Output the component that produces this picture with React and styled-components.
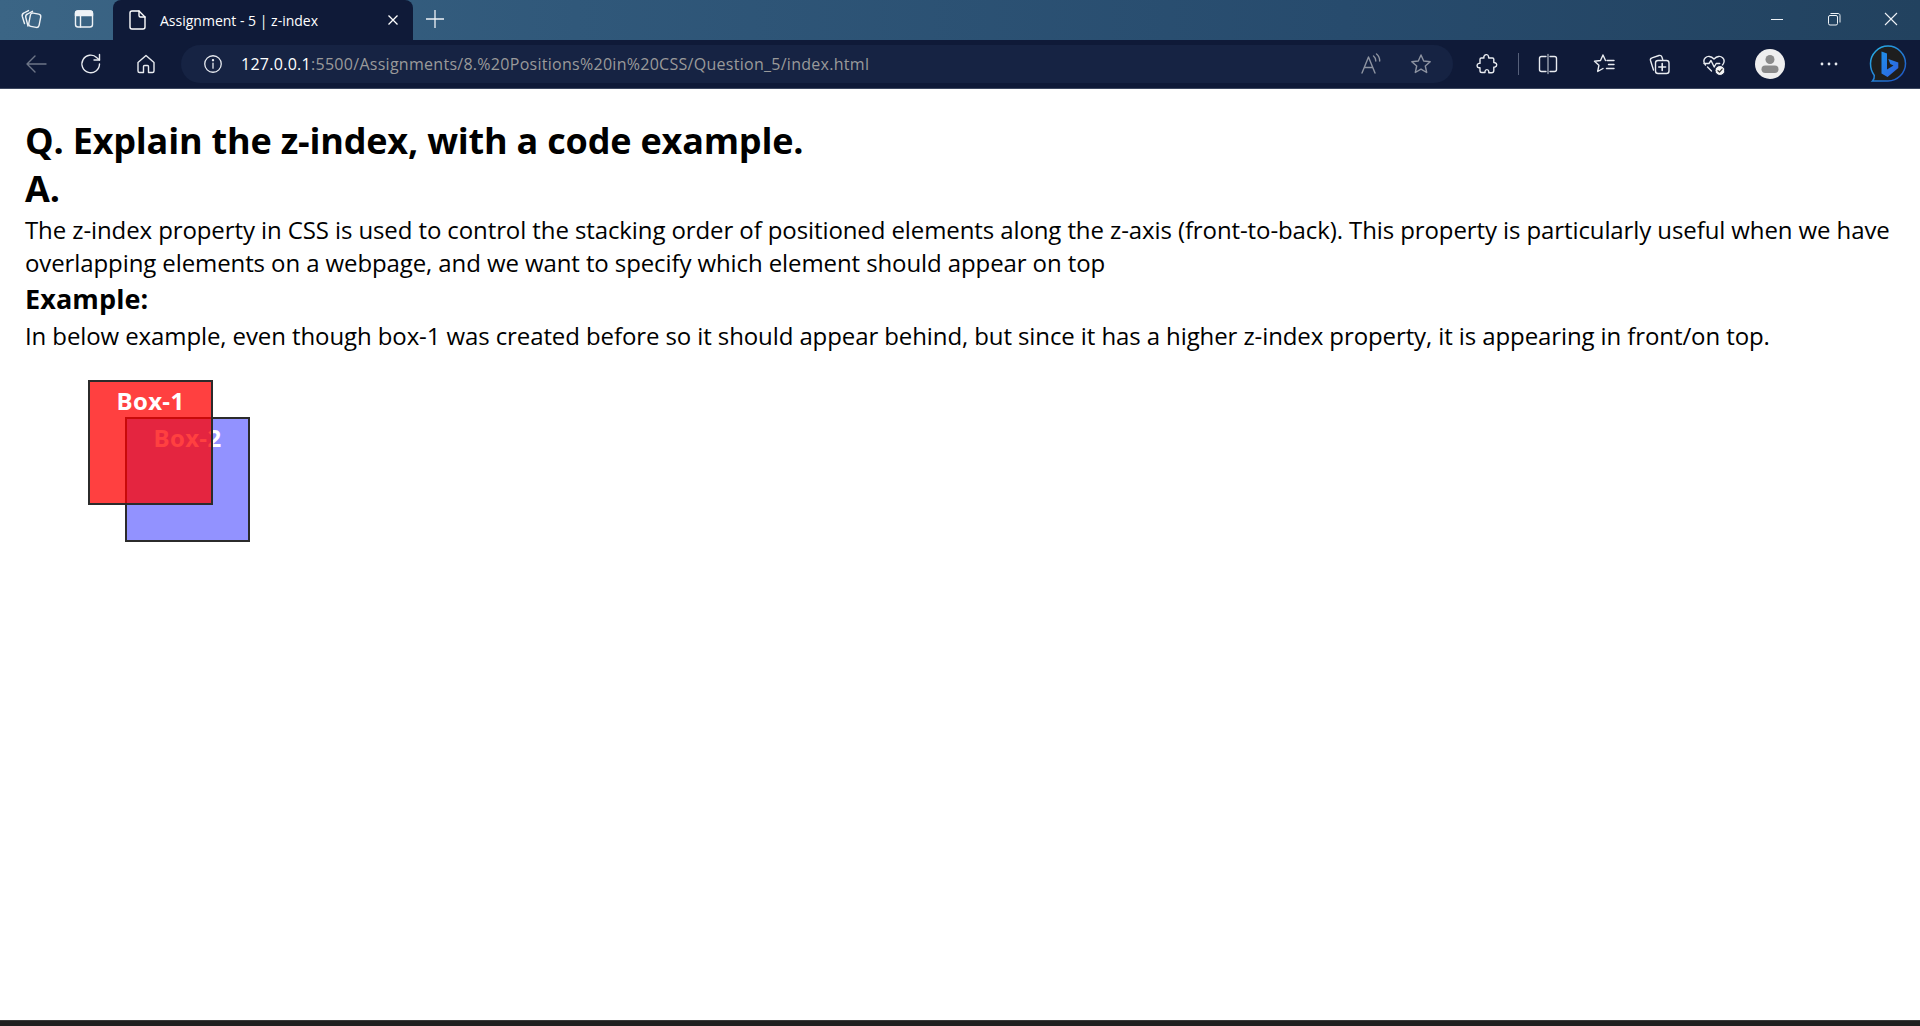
import React from 'react';
import styled, {createGlobalStyle} from 'styled-components';

const Global = createGlobalStyle`
    html, body {
        margin:0;
        padding:0;
        height:100%;
        background:#fff;
    }
    #root {
        height:100%;
    }
`

const Screen = styled.div`
    display:flex;
    flex-direction:column;
    height:1026px;
    overflow:hidden;
    font-family:"Open Sans", "Noto Sans", sans-serif;
`

const TabStrip = styled.div`
    display:flex;
    align-items:stretch;
    height:40px;
    padding-left:4px;
    background:linear-gradient(90deg, #3b6585 0%, #30587a 30%, #274b6d 70%, #22425f 100%);
`

const StripBtn = styled.div`
    display:flex;
    justify-content:center;
    align-items:center;
    width:${p => p.$w || 53}px;
    height:38px;
    color:#eef2f6;
`

const Tab = styled.div`
    display:flex;
    align-items:center;
    width:300px;
    margin-left:3px;
    padding:0 14px 0 12px;
    box-sizing:border-box;
    background:#0f1a38;
    border-radius:8px 8px 0 0;
    color:#fff;
`

const TabTitle = styled.span`
    flex:1;
    margin-left:11px;
    font-size:14px;
    white-space:nowrap;
`

const WindowBtns = styled.div`
    display:flex;
    margin-left:auto;
`

const Toolbar = styled.div`
    display:flex;
    align-items:center;
    height:49px;
    padding-left:8px;
    box-sizing:border-box;
    background:#0f1a38;
    border-bottom:1px solid #3d4860;
`

const NavBtn = styled.div`
    display:flex;
    justify-content:center;
    align-items:center;
    flex:none;
    width:${p => p.$w || 55}px;
    height:38px;
    margin-left:${p => p.$ml || 0}px;
    color:${p => p.$dim ? '#6d7587' : '#e8ebf0'};
`

const AddressBar = styled.div`
    display:flex;
    align-items:center;
    width:1272px;
    height:38px;
    margin-left:8px;
    padding-left:21px;
    box-sizing:border-box;
    flex:none;
    background:#162343;
    border-radius:19px;
    color:#e8ebf0;
`

const Url = styled.div`
    flex:1;
    margin-left:17px;
    font-size:16px;
    letter-spacing:0.28px;
    color:#9a9a9a;
    white-space:nowrap;
`

const Host = styled.span`
    color:#fff;
`

const BarIcons = styled.div`
    display:flex;
    align-items:center;
    padding-right:7px;
    color:#8d93a1;
`

const BarIcon = styled.div`
    display:flex;
    justify-content:center;
    width:50px;
`

const Sep = styled.div`
    flex:none;
    width:1px;
    height:22px;
    margin:0 14px 0 11px;
    background:#56607a;
`

const Avatar = styled.div`
    flex:none;
    width:30px;
    height:30px;
    border-radius:50%;
    background:#eee;
    overflow:hidden;
`

const Page = styled.main`
    flex:1;
    padding:28px 25px 0;
    color:#000;
`

const Heading = styled.h1`
    margin:0;
    font-size:36px;
    line-height:48px;
    font-weight:700;
    letter-spacing:-0.2px;
`

const SubHeading = styled.h3`
    margin:0;
    font-size:27px;
    line-height:40px;
    font-weight:700;
    letter-spacing:0.1px;
`

const Text = styled.p`
    margin:0;
    font-size:24px;
    line-height:33px;
    letter-spacing:-0.1px;
`

const Stage = styled.div`
    position:relative;
    height:162px;
    margin:28px 0 0 63px;
`

const Box = styled.div`
    position:absolute;
    left:${p => p.$x}px;
    top:${p => p.$x}px;
    width:125px;
    height:125px;
    box-sizing:border-box;
    padding-top:3px;
    border:2px solid #2b2b2b;
    background:${p => p.$bg};
    background-clip:padding-box;
    color:#fff;
    font-size:24px;
    line-height:32px;
    font-weight:700;
    letter-spacing:0.3px;
    text-align:center;
`

const BottomBar = styled.div`
    height:6px;
    background:#202020;
    border-top:1px solid #3a3a3a;
    box-sizing:border-box;
`

const Svg = ({size = 24, children}) => (
    <svg width={size} height={size} viewBox="0 0 24 24" fill="none" stroke="currentColor" strokeWidth="1.4" strokeLinecap="round" strokeLinejoin="round">
        {children}
    </svg>
)

const Workspaces = () => (
    <Svg>
        <path d="M5.500 16.500 3.300 9.500c-.4-1.600.1-2.800 1.600-3.500l4.600-2.400"/>
        <path d="M9 19 6.800 10.500c-.4-1.600.2-2.800 1.700-3.500l5-2.700"/>
        <rect x="10.500" y="6.500" width="10.500" height="13.500" rx="2.500" transform="rotate(11 15.700 13.200)"/>
    </Svg>
)

const TabActions = () => (
    <Svg>
        <rect x="3.500" y="4" width="17" height="16" rx="2.500"/>
        <path d="M3.500 8.500h17V6.500c0-1.500-1-2.500-2.500-2.500H6c-1.500 0-2.500 1-2.500 2.500z" fill="currentColor"/>
        <path d="M8.500 8.500V20"/>
    </Svg>
)

const PageIcon = () => (
    <Svg>
        <path d="M7 3h7l6 6v10c0 1.200-.9 2-2 2H7c-1.100 0-2-.8-2-2V5c0-1.200.9-2 2-2z"/>
        <path d="M14 3v4.500c0 1 .6 1.500 1.500 1.500H20"/>
    </Svg>
)

const Back = () => (
    <Svg><path d="M22 12H3M11 4l-8 8 8 8"/></Svg>
)

const Refresh = () => (
    <Svg>
        <path d="M20.500 12a8.800 8.800 0 1 1-2.600-6.300L20.500 8"/>
        <path d="M20.500 2.500V8H15"/>
    </Svg>
)

const HomeIcon = () => (
    <Svg>
        <path d="M4 10.500 12 3.500l8 7V19c0 .8-.6 1.500-1.500 1.500h-4V14.500c0-.6-.4-1-1-1h-3c-.6 0-1 .4-1 1v6h-4C4.600 20.500 4 19.800 4 19z"/>
    </Svg>
)

const InfoIcon = () => (
    <Svg size={22}>
        <circle cx="12" cy="12" r="9"/>
        <path d="M12 11v5.500"/>
        <circle cx="12" cy="7.800" r=".6" fill="currentColor"/>
    </Svg>
)

const ReadAloud = () => (
    <Svg>
        <path d="M3 21 9.500 5 16 21M5.300 15.500h8.400"/>
        <path d="M14.500 4c1.500 1.200 2.300 2.800 2.300 5M17.500 2c2.200 1.800 3.200 4.200 3.200 7"/>
    </Svg>
)

const StarIcon = () => (
    <Svg>
        <path d="m12 3 2.700 6 6.500.7-4.900 4.300 1.400 6.500L12 17.200 6.300 20.500l1.400-6.500L2.800 9.700 9.300 9z"/>
    </Svg>
)

const Puzzle = () => (
    <Svg>
        <path d="M9.500 3.500c1-1.300 3.500-1.200 4 .8l.2 1.700h3.800c.8 0 1.300.5 1.300 1.300v3.200l1.200.2c2.300.5 2.300 3.800 0 4.300l-1.200.2v3.300c0 1.500-.8 2.200-2.200 2.200h-2.800v-1.200c-.2-2.500-3.600-2.500-3.800 0V20.500H6.800c-1 0-1.800-.8-1.800-1.800v-3h-1c-2.500-.3-2.700-3.700 0-4.300h1V7.300C5 6.500 5.500 6 6.300 6H9l-.2-.5c-.1-.7.200-1.400.7-2z"/>
    </Svg>
)

const Split = () => (
    <Svg>
        <path d="M10 4.500H5.500c-1.200 0-2 .8-2 2v11c0 1.200.8 2 2 2H10"/>
        <path d="M14 4.500h4.500c1.200 0 2 .8 2 2v11c0 1.200-.8 2-2 2H14"/>
        <path d="M12 2.500v19" stroke="#9aa2b0"/>
    </Svg>
)

const Favorites = () => (
    <Svg>
        <path d="M13.500 8.500 11 3 8.500 8.500l-6 .8 4.400 4-1.200 6.200 5.300-3"/>
        <path d="M15 8.500h7M16.500 12.500H22M14.500 16.500H22"/>
    </Svg>
)

const Collections = () => (
    <Svg>
        <path d="M6.500 18 3.500 8.500c-.4-1.400.1-2.300 1.500-2.700L12 3.500c1.500-.4 2.400.1 2.900 1.500l.8 2.500"/>
        <rect x="8.500" y="8.500" width="13.500" height="13" rx="2.500"/>
        <path d="M15.200 11.500v7M11.800 15h6.800" strokeWidth="1.600"/>
    </Svg>
)

const Health = () => (
    <Svg>
        <path d="M3.500 13C1.500 10.500 1.700 7.500 3.400 5.800c2-2 5.600-2 8.600 1.200 3-3.200 6.600-3.200 8.600-1.200 1.700 1.700 1.900 4.700-.1 7.200"/>
        <path d="M2 11.500h5l2-3 3.200 6.500 2-3.500h3.500M5.500 15l4 4"/>
        <circle cx="18" cy="18.500" r="5" fill="#f4f4f4" stroke="#0f1a38" strokeWidth="1"/>
        <path d="m16 18.700 1.500 1.400 2.600-3" stroke="#333" strokeWidth="1.300"/>
    </Svg>
)

const AvatarFace = () => (
    <svg width="30" height="30" viewBox="0 0 30 30" fill="#8a8a8a">
        <circle cx="15" cy="10.500" r="4.500"/>
        <rect x="6.500" y="16.500" width="17" height="7.500" rx="3.700"/>
    </svg>
)

const Dots = () => (
    <svg width="24" height="24" viewBox="0 0 24 24" fill="currentColor">
        <circle cx="5" cy="12" r="1.400"/>
        <circle cx="12" cy="12" r="1.400"/>
        <circle cx="19" cy="12" r="1.400"/>
    </svg>
)

const BingSvg = styled.svg`
    flex:none;
`

const Bing = () => (
    <BingSvg width="40" height="40" viewBox="0 0 40 40">
        <defs>
            <linearGradient id="bingRing" x1="0" y1="0" x2="1" y2="1">
                <stop offset="0" stopColor="#29b5e8"/>
                <stop offset="1" stopColor="#1d4fc4"/>
            </linearGradient>
            <linearGradient id="bingB" x1="0" y1="0" x2="1" y2="1">
                <stop offset="0" stopColor="#1f8fe8"/>
                <stop offset="1" stopColor="#2f5fe0"/>
            </linearGradient>
        </defs>
        <path d="M20 2c9.500 0 17.500 8 17.500 17.500S29.500 37 20 37H4.500c1.500-1.500 2-3 1.800-5.500C3.800 28 2.500 24 2.500 19.500 2.500 10 10.500 2 20 2z" fill="#1e1e1e" stroke="url(#bingRing)" strokeWidth="1.500"/>
        <path d="M13.500 7.500 19 9.500v16l6.500-4-3.200-1.500-2-5 10 3.500v5.500L19.500 33l-6-3.400z" fill="url(#bingB)"/>
    </BingSvg>
)

const WinMin = () => (
    <svg width="14" height="14" viewBox="0 0 14 14" stroke="currentColor" strokeWidth="1"><path d="M1 7.500h12"/></svg>
)

const WinRestore = () => (
    <svg width="14" height="14" viewBox="0 0 14 14" fill="none" stroke="currentColor" strokeWidth="1">
        <rect x="1.500" y="3.500" width="9" height="9.500" rx="1.500"/>
        <path d="M3.500 1.500H11c1.200 0 2 .8 2 2v7"/>
    </svg>
)

const WinClose = () => (
    <svg width="14" height="14" viewBox="0 0 14 14" stroke="currentColor" strokeWidth="1.100"><path d="m1 1 12 12M13 1 1 13"/></svg>
)

const SmallX = () => (
    <svg width="12" height="12" viewBox="0 0 12 12" stroke="currentColor" strokeWidth="1.300"><path d="m1.500 1.500 9 9M10.500 1.500l-9 9"/></svg>
)

const PlusIcon = () => (
    <svg width="18" height="18" viewBox="0 0 18 18" stroke="currentColor" strokeWidth="1.300"><path d="M9 0v18M0 9h18"/></svg>
)

const App = () => {
    return (
        <Screen>
            <Global/>
            <TabStrip>
                <StripBtn><Workspaces/></StripBtn>
                <StripBtn><TabActions/></StripBtn>
                <Tab>
                    <PageIcon/>
                    <TabTitle>Assignment - 5 | z-index</TabTitle>
                    <SmallX/>
                </Tab>
                <StripBtn $w={44}><PlusIcon/></StripBtn>
                <WindowBtns>
                    <StripBtn $w={57}><WinMin/></StripBtn>
                    <StripBtn $w={57}><WinRestore/></StripBtn>
                    <StripBtn $w={58}><WinClose/></StripBtn>
                </WindowBtns>
            </TabStrip>
            <Toolbar>
                <NavBtn $dim><Back/></NavBtn>
                <NavBtn><Refresh/></NavBtn>
                <NavBtn><HomeIcon/></NavBtn>
                <AddressBar>
                    <InfoIcon/>
                    <Url><Host>127.0.0.1</Host>:5500/Assignments/8.%20Positions%20in%20CSS/Question_5/index.html</Url>
                    <BarIcons>
                        <BarIcon><ReadAloud/></BarIcon>
                        <BarIcon><StarIcon/></BarIcon>
                    </BarIcons>
                </AddressBar>
                <NavBtn $w={40} $ml={14}><Puzzle/></NavBtn>
                <Sep/>
                <NavBtn $w={30}><Split/></NavBtn>
                <NavBtn $w={82}><Favorites/></NavBtn>
                <NavBtn $w={28}><Collections/></NavBtn>
                <NavBtn $w={82}><Health/></NavBtn>
                <Avatar><AvatarFace/></Avatar>
                <NavBtn $w={88}><Dots/></NavBtn>
                <NavBtn $w={30}><Bing/></NavBtn>
            </Toolbar>
            <Page>
                <Heading>Q. Explain the z-index, with a code example.</Heading>
                <Heading>A.</Heading>
                <Text>The z-index property in CSS is used to control the stacking order of positioned elements along the z-axis (front-to-back). This property is particularly useful when we have overlapping elements on a webpage, and we want to specify which element should appear on top</Text>
                <SubHeading>Example:</SubHeading>
                <Text>In below example, even though box-1 was created before so it should appear behind, but since it has a higher z-index property, it is appearing in front/on top.</Text>
                <Stage>
                    <Box $x={37} $bg="#9292ff">Box-2</Box>
                    <Box $x={0} $bg="rgba(255, 0, 0, 0.75)">Box-1</Box>
                </Stage>
            </Page>
            <BottomBar/>
        </Screen>
    )
}

export default App;
